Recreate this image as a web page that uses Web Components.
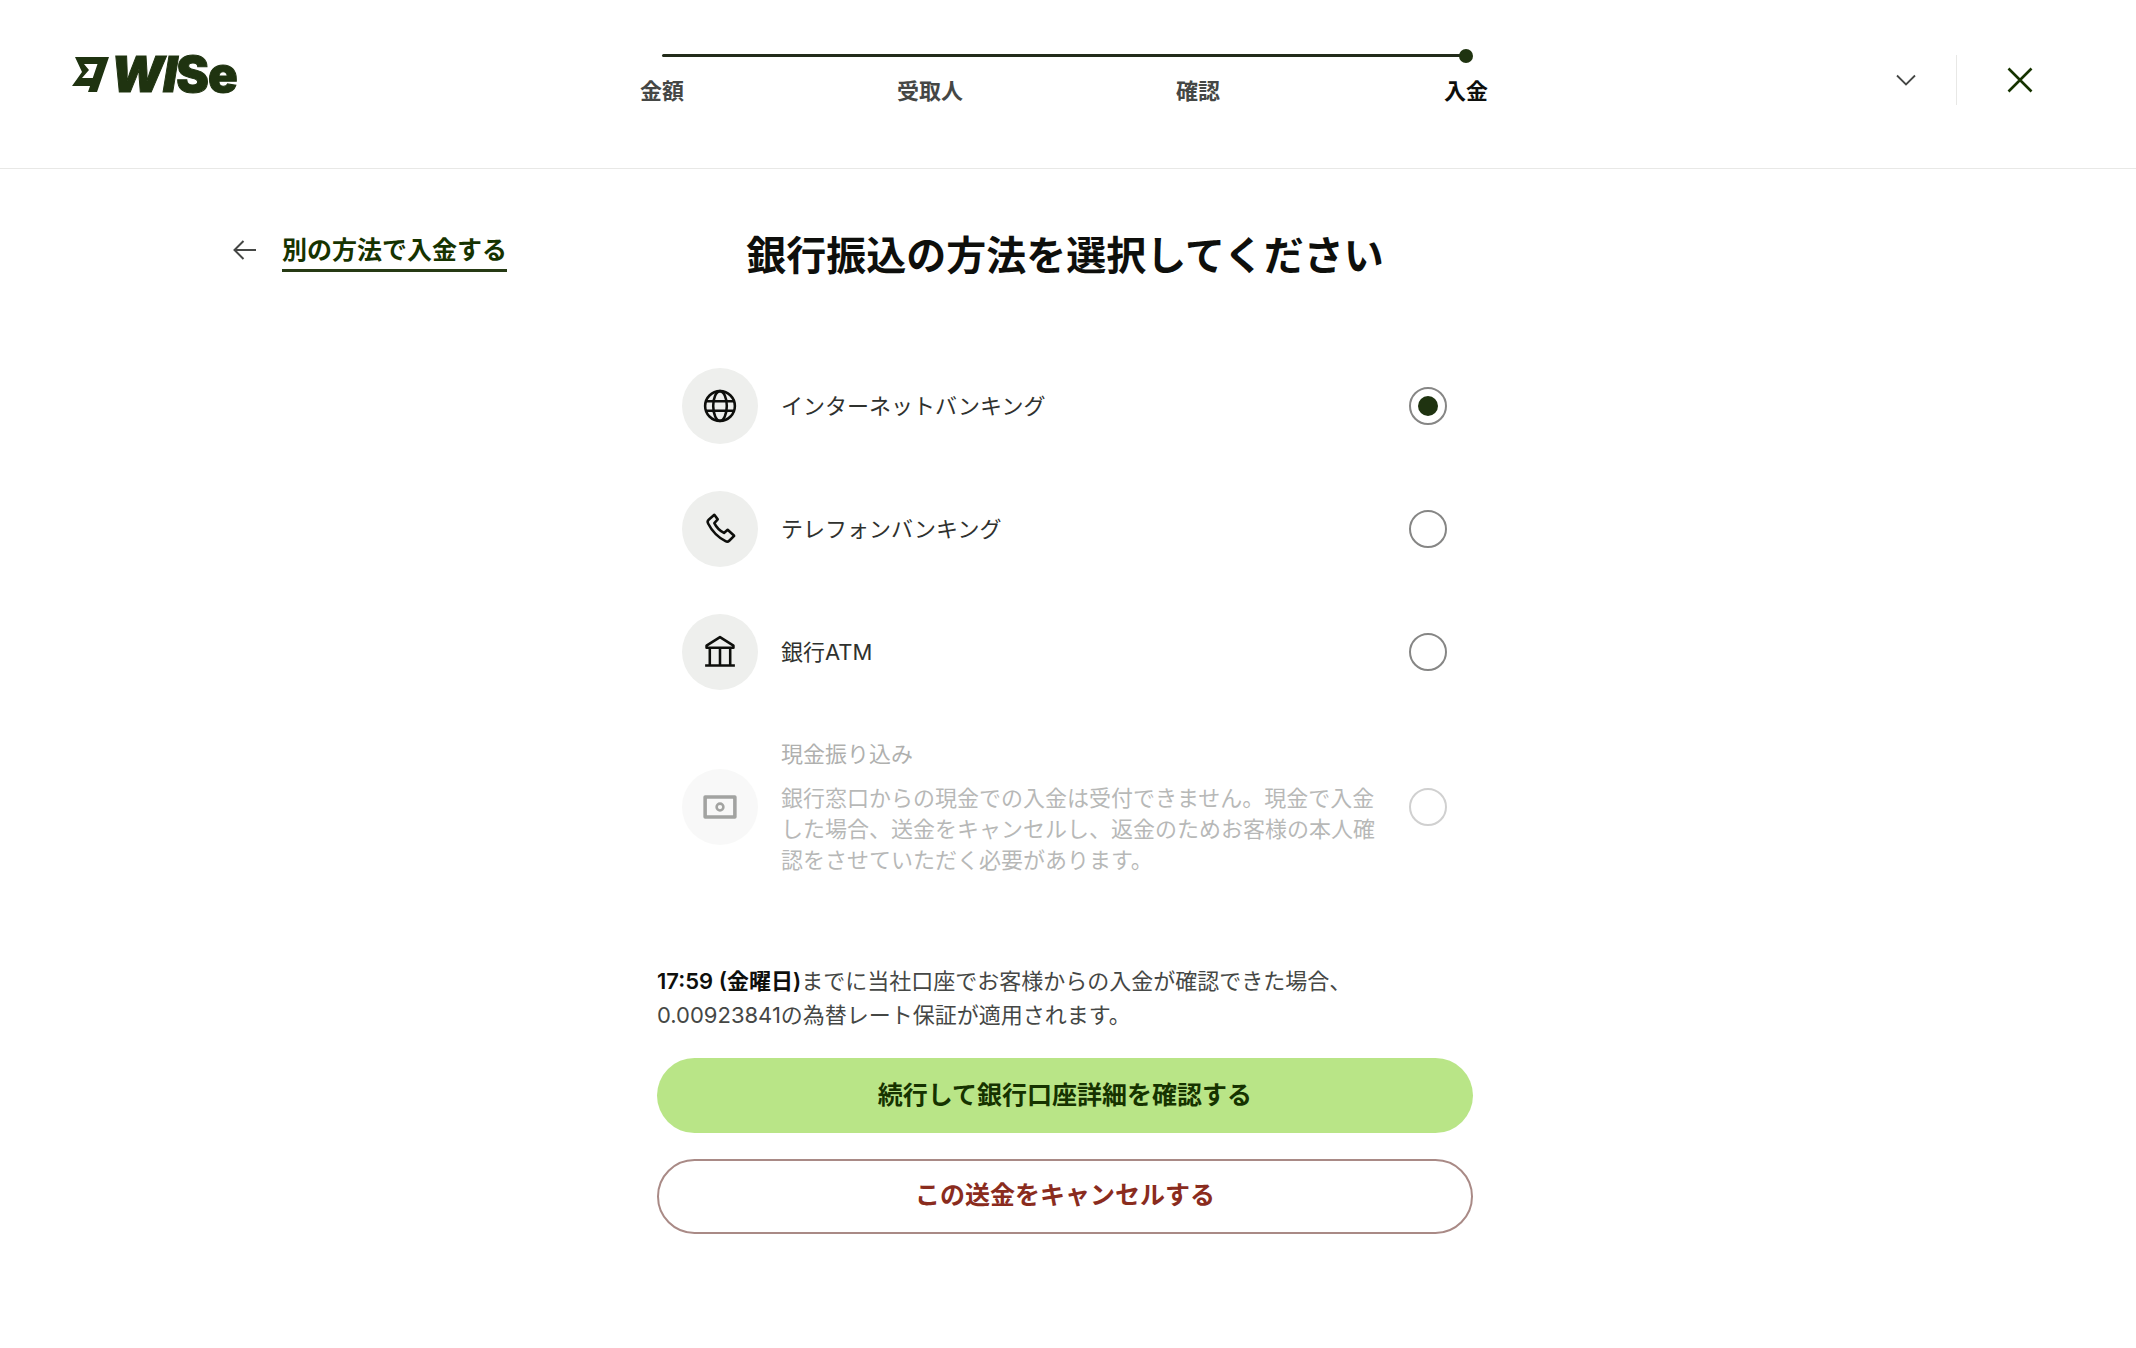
<!doctype html>
<html lang="ja">
<head>
<meta charset="utf-8">
<title>Wise</title>
<style>
  html, body { margin: 0; background: #fff; }
  body { font-family: Inter, "Noto Sans CJK JP", sans-serif; color: #163300; }
  wise-page { min-height: 1348px; }
</style>
</head>
<body>
<wise-page>
  <wise-header slot="header" steps="金額,受取人,確認,入金"></wise-header>
  <wise-back slot="back">別の方法で入金する</wise-back>
  <h1 slot="title" style="margin:0;font:700 40px/48px Inter,'Noto Sans CJK JP',sans-serif;color:#0e0f0c;text-align:center">銀行振込の方法を選択してください</h1>
  <wise-option icon="globe" checked>インターネットバンキング</wise-option>
  <wise-option icon="phone">テレフォンバンキング</wise-option>
  <wise-option icon="bank">銀行ATM</wise-option>
  <wise-option icon="cash" disabled note="銀行窓口からの現金での入金は受付できません。現金で入金した場合、送金をキャンセルし、返金のためお客様の本人確認をさせていただく必要があります。">現金振り込み</wise-option>
  <wise-note slot="note"><b>17:59 (金曜日)</b>までに当社口座でお客様からの入金が確認できた場合、<br>0.00923841の為替レート保証が適用されます。</wise-note>
  <wise-button slot="actions" kind="primary">続行して銀行口座詳細を確認する</wise-button>
  <wise-button slot="actions" kind="danger">この送金をキャンセルする</wise-button>
</wise-page>

<script>
const icons = {
  globe: `<circle cx="12" cy="12" r="10.500"/><ellipse cx="12" cy="12" rx="4.800" ry="10.500"/><path d="M2 8.600h20M2 15.400h20"/>`,
  phone: `<path d="M8 2 4 5.500c-.8.7-.9 1.700-.4 2.600 2.700 5.300 7 9.700 12.300 12.500.9.500 1.900.400 2.600-.3l3.500-3.500-4.600-4.300-2.600 2.300c-3-1.500-5.300-3.900-6.800-6.900l2.400-2.700z"/>`,
  bank: `<path d="M12 1.500 2.500 7.500v1.500h19V7.500zM4.800 9v12M12 9v12M19.200 9v12M1.500 21.500h21"/>`,
  cash: `<rect x="1.500" y="5" width="21" height="14" stroke-width="2.500"/><circle cx="12" cy="12" r="2.400"/>`
}

customElements.define('wise-page', class extends HTMLElement {
  constructor () {
    super()
    this.attachShadow({ mode: 'open' }).innerHTML = `
      <style>
        :host { display: block; }
        .body {
          display: grid;
          grid-template-columns: 657px 816px 1fr;
          padding-top: 63px;
        }
        .back { padding-left: 232px; }
        .options {
          display: flex;
          flex-direction: column;
          gap: 47px;
          margin-top: 88px;
          padding: 0 26px 0 25px;
        }
        .note { display: block; margin-top: 88px; }
        .actions {
          display: flex;
          flex-direction: column;
          gap: 26px;
          margin-top: 26px;
        }
      </style>
      <slot name="header"></slot>
      <div class="body">
        <div class="back"><slot name="back"></slot></div>
        <div>
          <slot name="title"></slot>
          <div class="options"><slot></slot></div>
          <div class="note"><slot name="note"></slot></div>
          <div class="actions"><slot name="actions"></slot></div>
        </div>
      </div>
    `
  }
})

customElements.define('wise-logo', class extends HTMLElement {
  constructor () {
    super()
    this.attachShadow({ mode: 'open' }).innerHTML = `
      <style>
        :host { display: flex; align-items: center; gap: 1px; height: 36px; color: #1f3310; }
        svg { display: block; flex: none; width: 38px; height: 36px; }
        span {
          font: 900 49px/36px Inter, sans-serif;
          letter-spacing: -1px;
          -webkit-text-stroke: 1px currentColor;
        }
        i { font-style: italic; }
      </style>
      <svg viewBox="0 0 38 36" aria-hidden="true">
        <path fill="currentColor" d="M3 0H37L25 35H16L25.500 7H12L17 13 10 21H21L18 29H0L10 15z"/>
      </svg>
      <span><i>WI</i>Se</span>
    `
  }
})

customElements.define('wise-stepper', class extends HTMLElement {
  constructor () {
    super()
    const steps = this.getAttribute('steps').split(',')
    this.attachShadow({ mode: 'open' }).innerHTML = `
      <style>
        :host { display: block; }
        .track {
          position: relative;
          height: 3px;
          margin: 0 134px;
          background: #222b1a;
          border-radius: 2px;
        }
        .dot {
          position: absolute;
          right: -7px;
          top: -5.500px;
          width: 14px;
          height: 14px;
          border-radius: 50%;
          background: #1f3310;
        }
        .labels {
          display: grid;
          grid-template-columns: repeat(${steps.length}, 1fr);
          margin-top: 19px;
          font: 600 22px/30px Inter, "Noto Sans CJK JP", sans-serif;
          color: #454745;
          text-align: center;
        }
        .labels span:last-child { color: #0e0f0c; }
      </style>
      <div class="track"><div class="dot"></div></div>
      <div class="labels">${steps.map(s => `<span>${s}</span>`).join('')}</div>
    `
  }
})

customElements.define('wise-header', class extends HTMLElement {
  constructor () {
    super()
    const steps = this.getAttribute('steps')
    this.attachShadow({ mode: 'open' }).innerHTML = `
      <style>
        :host {
          display: grid;
          grid-template-columns: 456px 1072px 1fr;
          box-sizing: border-box;
          height: 169px;
          padding-left: 72px;
          border-bottom: 1.500px solid #e8e8e6;
        }
        wise-logo { margin-top: 57px; }
        wise-stepper { margin-top: 54px; }
        .actions {
          display: flex;
          align-items: center;
          justify-content: flex-end;
          height: 50px;
          margin-top: 55px;
          padding-right: 103px;
          color: #163300;
        }
        .divider { width: 1.500px; height: 50px; margin: 0 50px 0 40px; background: #e8e8e6; }
        svg { display: block; fill: none; stroke: currentColor; }
      </style>
      <wise-logo></wise-logo>
      <wise-stepper steps="${steps}"></wise-stepper>
      <div class="actions">
        <svg width="20" height="12" viewBox="0 0 20 12" stroke-width="1.800" color="#454745"><path d="M1 1.500 10 10.500 19 1.500"/></svg>
        <div class="divider"></div>
        <svg width="26" height="26" viewBox="0 0 26 26" stroke-width="2.600"><path d="M1.500 1.500 24.500 24.500M24.500 1.500 1.500 24.500"/></svg>
      </div>
    `
  }
})

customElements.define('wise-back', class extends HTMLElement {
  constructor () {
    super()
    this.attachShadow({ mode: 'open' }).innerHTML = `
      <style>
        :host {
          display: inline-flex;
          align-items: flex-start;
          gap: 25px;
          font: 600 25px/34px Inter, "Noto Sans CJK JP", sans-serif;
          color: #163300;
        }
        svg { display: block; margin: 8px 0 0 1px; fill: none; stroke: #454745; stroke-width: 2; }
        span { display: block; padding: 1px 0 2px; border-bottom: 3px solid #263a14; }
      </style>
      <svg width="24" height="20" viewBox="0 0 24 20"><path d="M23 10H1.500M10.500 1 1.500 10l9 9"/></svg>
      <span><slot></slot></span>
    `
  }
})

customElements.define('wise-option', class extends HTMLElement {
  constructor () {
    super()
    const note = this.getAttribute('note')
    const icon = icons[this.getAttribute('icon')]
    this.attachShadow({ mode: 'open' }).innerHTML = `
      <style>
        :host {
          display: flex;
          align-items: center;
          gap: 23px;
          font: 400 22px/31px Inter, "Noto Sans CJK JP", sans-serif;
          color: #2f312e;
        }
        :host([disabled]) { opacity: .38; }
        .icon {
          display: flex;
          flex: none;
          align-items: center;
          justify-content: center;
          width: 76px;
          height: 76px;
          border-radius: 50%;
          background: #eeefed;
          color: #0e0f0c;
        }
        .icon svg { display: block; fill: none; stroke: currentColor; stroke-width: 1.800; stroke-linejoin: round; }
        .text { flex: 1; }
        .note { margin-top: 13px; color: #454745; }
        :host([note]) .text { padding-top: 2px; }
        .radio {
          flex: none;
          display: flex;
          align-items: center;
          justify-content: center;
          box-sizing: border-box;
          width: 38px;
          height: 38px;
          margin-left: 8px;
          border: 2px solid #868685;
          border-radius: 50%;
        }
        :host([checked]) .radio::after {
          content: "";
          width: 20px;
          height: 20px;
          border-radius: 50%;
          background: #1f3310;
        }
      </style>
      <div class="icon"><svg width="34" height="34" viewBox="0 0 24 24">${icon}</svg></div>
      <div class="text">
        <div><slot></slot></div>
        ${note ? `<div class="note">${note}</div>` : ''}
      </div>
      <div class="radio"></div>
    `
  }
})

customElements.define('wise-note', class extends HTMLElement {
  constructor () {
    super()
    this.attachShadow({ mode: 'open' }).innerHTML = `
      <style>
        :host {
          display: block;
          font: 400 22px/34px Inter, "Noto Sans CJK JP", sans-serif;
          color: #454745;
        }
        ::slotted(b) { font-weight: 600; color: #0e0f0c; }
      </style>
      <slot></slot>
    `
  }
})

customElements.define('wise-button', class extends HTMLElement {
  constructor () {
    super()
    this.attachShadow({ mode: 'open' }).innerHTML = `
      <style>
        :host {
          display: flex;
          align-items: center;
          justify-content: center;
          box-sizing: border-box;
          height: 75px;
          border-radius: 38px;
          font: 600 25px/34px Inter, "Noto Sans CJK JP", sans-serif;
        }
        :host([kind="primary"]) { padding-bottom: 2px; background: #b9e587; color: #163300; }
        :host([kind="danger"]) { padding-bottom: 3px; border: 2px solid #a98a86; color: #8a2c1e; }
      </style>
      <slot></slot>
    `
  }
})
</script>
</body>
</html>
